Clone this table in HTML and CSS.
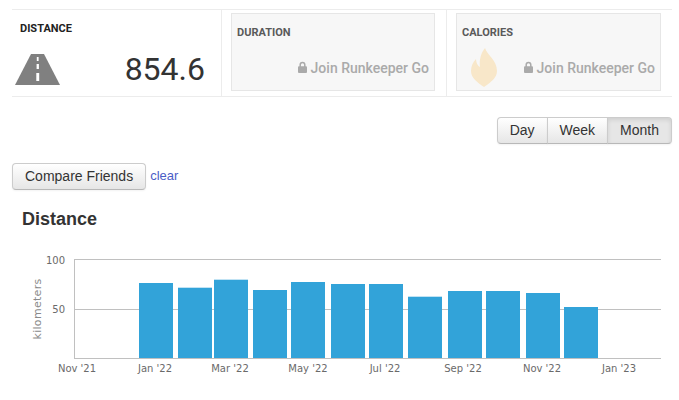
FILE: index.html
```html
<!DOCTYPE html>
<html>
<head>
<meta charset="utf-8">
<link rel="stylesheet" href="styles.css">
</head>
<body>
<div class="page">
  <div class="stats">
    <div class="stat stat-main">
      <div class="stat-label">DISTANCE</div>
      <div class="stat-body">
        <svg class="road" width="46" height="31" viewBox="0 0 46 31">
          <path d="M16 0 H29 L45 31 H0 Z" fill="#808080"/>
          <rect x="21.8" y="3" width="1.8" height="4" fill="#fff"/>
          <rect x="21.6" y="10" width="2.3" height="5" fill="#fff"/>
          <rect x="21.3" y="19" width="2.9" height="8" fill="#fff"/>
        </svg>
        <span class="stat-value">854.6</span>
      </div>
    </div>
    <div class="stat">
      <div class="locked">
        <div class="stat-label muted">DURATION</div>
        <div class="stat-body locked-body">
          <span></span>
          <span class="join">
            <svg class="lock" width="9" height="12" viewBox="0 0 9 12">
              <path d="M2.2 6 V3.8 a2.3 2.3 0 0 1 4.6 0 V6" fill="none" stroke="#aaa" stroke-width="1.5"/>
              <rect x="0" y="5.3" width="9" height="6.7" rx="1" fill="#aaa"/>
            </svg>Join Runkeeper Go</span>
        </div>
      </div>
    </div>
    <div class="stat">
      <div class="locked">
        <div class="stat-label muted">CALORIES</div>
        <div class="stat-body locked-body">
          <svg class="flame" width="28" height="39" viewBox="0 0 28 39">
            <path d="M15 0 C17 7 27 12 27 23 C27 30 21 34 14 39 C7 34 1 30 1 23 C1 18 3 14 6 11 C6 15 8 18 10 19 C9 12 11 5 15 0 Z" fill="#f8e7c9"/>
          </svg>
          <span class="join">
            <svg class="lock" width="9" height="12" viewBox="0 0 9 12">
              <path d="M2.2 6 V3.8 a2.3 2.3 0 0 1 4.6 0 V6" fill="none" stroke="#aaa" stroke-width="1.5"/>
              <rect x="0" y="5.3" width="9" height="6.7" rx="1" fill="#aaa"/>
            </svg>Join Runkeeper Go</span>
        </div>
      </div>
    </div>
  </div>

  <div class="range">
    <div class="btn-group">
      <button class="btn">Day</button><button class="btn">Week</button><button class="btn active">Month</button>
    </div>
  </div>

  <div class="compare">
    <button class="btn">Compare Friends</button>
    <a class="clear" href="#">clear</a>
  </div>

  <h2 class="chart-title">Distance</h2>

  <svg class="chart" width="660" height="140" viewBox="0 0 660 140">
    <g stroke="#c0c0c0" stroke-width="1">
      <line x1="62" y1="20.5" x2="649" y2="20.5"/>
      <line x1="62" y1="70.5" x2="649" y2="70.5"/>
      <line x1="62" y1="119.5" x2="649" y2="119.5"/>
      <line x1="62.5" y1="20" x2="62.5" y2="120"/>
    </g>
    <g fill="#32a3d9">
      <rect x="127" y="44" width="34" height="75"/>
      <rect x="166" y="48.7" width="34" height="70.3"/>
      <rect x="202" y="40.7" width="34" height="78.3"/>
      <rect x="241" y="51" width="34" height="68"/>
      <rect x="279" y="43" width="34" height="76"/>
      <rect x="319" y="45" width="34" height="74"/>
      <rect x="357" y="45" width="34" height="74"/>
      <rect x="396" y="57.7" width="34" height="61.3"/>
      <rect x="436" y="52" width="34" height="67"/>
      <rect x="474" y="52" width="34" height="67"/>
      <rect x="514" y="54" width="34" height="65"/>
      <rect x="552" y="68" width="34" height="51"/>
    </g>
    <g class="axis-label" text-anchor="end">
      <text x="53" y="25">100</text>
      <text x="53" y="74">50</text>
    </g>
    <text class="axis-title" transform="translate(29 70) rotate(-90)" text-anchor="middle">kilometers</text>
    <g class="axis-label" text-anchor="middle">
      <text x="65" y="133">Nov '21</text>
      <text x="143" y="133">Jan '22</text>
      <text x="218" y="133">Mar '22</text>
      <text x="296" y="133">May '22</text>
      <text x="373" y="133">Jul '22</text>
      <text x="451" y="133">Sep '22</text>
      <text x="530" y="133">Nov '22</text>
      <text x="607" y="133">Jan '23</text>
    </g>
  </svg>
</div>
</body>
</html>
```

FILE: styles.css
```css
body {
  margin: 0;
  background: #fff;
  font-family: Roboto, "Liberation Sans", Arial, sans-serif;
  color: #333;
}

.page {
  padding: 9px 7px 0 12px;
}

.stats {
  display: grid;
  grid-template-columns: 209px 225px 1fr;
  border-top: 1px solid #ececec;
  border-bottom: 1px solid #ececec;
  height: 86px;
}

.stat + .stat {
  border-left: 1px solid #ececec;
}

.stat-main {
  padding: 12px 16px 0 8px;
}

.stat-label {
  font-size: 11px;
  line-height: 13px;
  font-weight: 700;
  color: #222;
}

.stat-label.muted {
  color: #5a5a5a;
}

.stat-main .stat-body {
  display: flex;
  align-items: center;
  justify-content: space-between;
  margin-top: 18px;
}

.road {
  margin-left: -5px;
  display: block;
}

.stat-value {
  font-size: 32px;
  line-height: 32px;
  color: #333;
}

.locked {
  margin: 3px 11px 0 9px;
  background: #f7f7f7;
  border: 1px solid #e6e6e6;
  padding: 12px 5px 0 5px;
  box-sizing: border-box;
  height: 78px;
}

.locked-body {
  display: flex;
  align-items: center;
  justify-content: space-between;
  margin-top: 9px;
  height: 39px;
}

.flame {
  display: block;
  margin-left: 8px;
}

.join {
  display: flex;
  align-items: center;
  gap: 4px;
  font-size: 14px;
  line-height: 16px;
  font-weight: 500;
  color: #aaa;
}

.lock {
  display: block;
  margin-top: -1px;
}

.range {
  display: flex;
  justify-content: flex-end;
  margin-top: 20px;
}

.btn-group {
  display: flex;
}

.btn {
  font-family: "Liberation Sans", Arial, sans-serif;
  font-size: 14px;
  line-height: 19px;
  color: #333;
  padding: 3px 12px;
  border: 1px solid #cccccc;
  border-bottom-color: #b8b8b8;
  border-radius: 4px;
  background: linear-gradient(#ffffff, #e6e6e6);
  box-shadow: inset 0 1px 0 rgba(255, 255, 255, 0.2), 0 1px 2px rgba(0, 0, 0, 0.05);
  cursor: pointer;
  margin: 0;
}

.btn-group .btn {
  border-radius: 0;
}

.btn-group .btn + .btn {
  margin-left: -1px;
}

.btn-group .btn:first-child {
  border-radius: 4px 0 0 4px;
}

.btn-group .btn:last-child {
  border-radius: 0 4px 4px 0;
}

.btn.active {
  background: #e6e6e6;
  box-shadow: inset 0 2px 4px rgba(0, 0, 0, 0.1), 0 1px 2px rgba(0, 0, 0, 0.05);
}

.compare {
  display: flex;
  align-items: center;
  gap: 4px;
  margin-top: 19px;
}

.clear {
  font-family: "Liberation Sans", Arial, sans-serif;
  font-size: 13px;
  color: #4a5dc6;
  text-decoration: none;
  margin-top: -3px;
}

.chart-title {
  margin: 19px 0 0 10px;
  font-family: "Liberation Sans", Arial, sans-serif;
  font-size: 18px;
  line-height: 21px;
  font-weight: 700;
  color: #333;
}

.chart {
  display: block;
  margin-top: 9px;
}

.axis-label {
  font-family: "DejaVu Sans", Verdana, sans-serif;
  font-size: 10px;
  fill: #6a6a6a;
}

.axis-title {
  font-family: "DejaVu Sans", Verdana, sans-serif;
  font-size: 11px;
  letter-spacing: 0.3px;
  fill: #8a8a8a;
}
```
